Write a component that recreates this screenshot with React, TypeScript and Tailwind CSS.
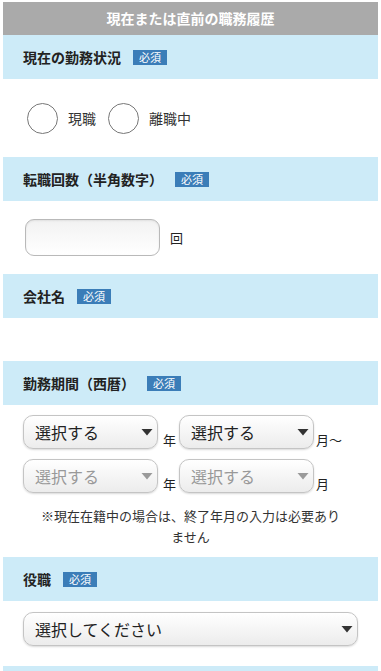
const font = { fontFamily: '"Noto Sans CJK JP", "Noto Sans", sans-serif' };

function Badge() {
  return (
    <span className="ml-[12px] inline-block bg-[#3b7db8] px-[6px] text-[11px] leading-[15px] text-white font-normal">
      必須
    </span>
  );
}

function SectionHead({ title }: { title: string }) {
  return (
    <div className="flex h-[44px] items-center bg-[#cdebf8] pl-[20px] text-[14px] font-bold text-[#222]">
      <span>{title}</span>
      <Badge />
    </div>
  );
}

function Arrow({ muted }: { muted?: boolean }) {
  return (
    <svg width="12" height="8" viewBox="0 0 12 8" className="shrink-0">
      <path d="M0.5 1 L11.5 1 L6 7.5 Z" fill={muted ? '#9a9a9a' : '#333'} />
    </svg>
  );
}

function Select({ label, width, muted }: { label: string; width: string; muted?: boolean }) {
  return (
    <div
      className={`flex h-[34px] ${width} items-center justify-between rounded-[10px] border border-[#c4c4c4] bg-gradient-to-b from-white to-[#ececec] pl-[11px] pr-[4px] shadow-[0_1px_2px_rgba(0,0,0,0.15)]`}
    >
      <span className={`text-[16px] ${muted ? 'text-[#999]' : 'text-[#222]'}`}>{label}</span>
      <Arrow muted={muted} />
    </div>
  );
}

function Radio({ label }: { label: string }) {
  return (
    <label className="flex items-center gap-[10px]">
      <span className="h-[31px] w-[31px] rounded-full border border-[#777] bg-white" />
      <span className="text-[14px] text-[#333]">{label}</span>
    </label>
  );
}

export default function App() {
  return (
    <div className="h-[671px] w-[381px] overflow-hidden bg-white px-[3px] pt-[2px]" style={font}>
      <div className="w-[375px]">
        <div className="flex h-[33px] items-center justify-center bg-[#aaaaaa] text-[14px] font-bold text-white">
          現在または直前の職務履歴
        </div>

        <SectionHead title="現在の勤務状況" />
        <div className="flex h-[78px] items-center gap-[12px] pl-[24px]">
          <Radio label="現職" />
          <Radio label="離職中" />
        </div>

        <SectionHead title="転職回数（半角数字）" />
        <div className="flex h-[73px] items-center gap-[10px] pl-[22px]">
          <div className="h-[37px] w-[135px] rounded-[9px] border border-[#b9b9b9] bg-gradient-to-b from-[#f2f2f2] to-white shadow-[inset_0_1px_2px_rgba(0,0,0,0.08)]" />
          <span className="text-[13px] text-[#222]">回</span>
        </div>

        <SectionHead title="会社名" />
        <div className="h-[43px]" />

        <SectionHead title="勤務期間（西暦）" />
        <div className="pl-[20px] pt-[10px]">
          <div className="flex items-end">
            <Select label="選択する" width="w-[135px]" />
            <span className="ml-[5px] mr-[3px] text-[13px] text-[#222]">年</span>
            <Select label="選択する" width="w-[135px]" />
            <span className="ml-[2px] text-[13px] text-[#222]">月～</span>
          </div>
          <div className="mt-[10px] flex items-end">
            <Select label="選択する" width="w-[135px]" muted />
            <span className="ml-[5px] mr-[3px] text-[13px] text-[#222]">年</span>
            <Select label="選択する" width="w-[135px]" muted />
            <span className="ml-[2px] text-[13px] text-[#222]">月</span>
          </div>
        </div>
        <p className="px-[34px] pt-[12px] pb-[10px] text-center text-[13px] leading-[21px] text-[#333]">
          ※現在在籍中の場合は、終了年月の入力は必要ありません
        </p>

        <SectionHead title="役職" />
        <div className="h-[65px] pl-[20px] pt-[11px]">
          <Select label="選択してください" width="w-[335px]" />
        </div>
        <div className="h-[10px] bg-[#cdebf8]" />
      </div>
    </div>
  );
}
